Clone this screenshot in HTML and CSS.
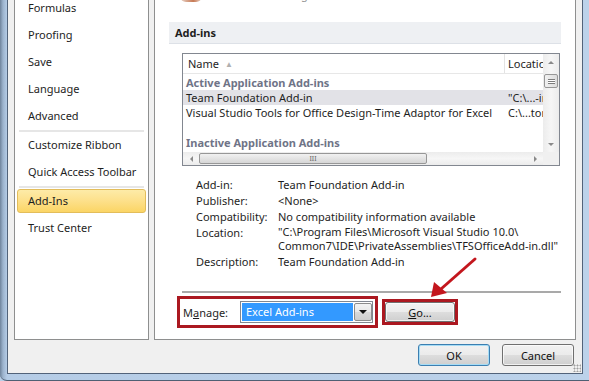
FILE: index.html
```html
<!DOCTYPE html>
<html lang="en">
<head>
  <meta charset="UTF-8">
  <title>Excel Options - Add-Ins</title>
  <link rel="stylesheet" href="styles.css">
</head>
<body>
  <div class="frame">
    <div class="dialog">
      <div class="panes">
        <ul class="nav">
          <li class="nav-item">Formulas</li>
          <li class="nav-item">Proofing</li>
          <li class="nav-item">Save</li>
          <li class="nav-item">Language</li>
          <li class="nav-item">Advanced</li>
          <li class="nav-sep"></li>
          <li class="nav-item">Customize Ribbon</li>
          <li class="nav-item">Quick Access Toolbar</li>
          <li class="nav-sep"></li>
          <li class="nav-item active">Add-Ins</li>
          <li class="nav-item">Trust Center</li>
        </ul>

        <div class="main">
          <div class="intro">
            <span class="intro-icon"></span>
            <span class="intro-text">View and manage Microsoft Office Add-ins.</span>
          </div>

          <div class="section-head">Add-ins</div>

          <div class="list">
            <div class="list-body">
              <div class="list-row list-header">
                <span class="cell">Name <span class="sort">&#9650;</span></span>
                <span class="cell cell-loc">Location</span>
              </div>
              <div class="list-row group"><span class="cell">Active Application Add-ins</span></div>
              <div class="list-row selected">
                <span class="cell">Team Foundation Add-in</span>
                <span class="cell cell-loc">"C:\...-in.dll"</span>
              </div>
              <div class="list-row">
                <span class="cell">Visual Studio Tools for Office Design-Time Adaptor for Excel</span>
                <span class="cell cell-loc">C:\...tor.dll</span>
              </div>
              <div class="list-row"></div>
              <div class="list-row group"><span class="cell">Inactive Application Add-ins</span></div>
              <div class="list-row">
                <span class="cell">Analysis ToolPak</span>
                <span class="cell cell-loc">F:\...PO.XLL</span>
              </div>
            </div>
            <div class="vscroll">
              <span class="sb-btn"><span class="tri tri-up"></span></span>
              <span class="sb-thumb-v"><span class="grip-v"></span></span>
              <span class="sb-track"></span>
              <span class="sb-btn"><span class="tri tri-down"></span></span>
            </div>
            <div class="hscroll">
              <span class="sb-btn"><span class="tri tri-left"></span></span>
              <span class="sb-thumb-h"><span class="grip-h">III</span></span>
              <span class="sb-track"></span>
              <span class="sb-btn"><span class="tri tri-right"></span></span>
            </div>
            <div class="sb-corner"></div>
          </div>

          <div class="details">
            <span class="label">Add-in:</span>
            <span>Team Foundation Add-in</span>
            <span class="label">Publisher:</span>
            <span>&lt;None&gt;</span>
            <span class="label">Compatibility:</span>
            <span>No compatibility information available</span>
            <span class="label">Location:</span>
            <span class="wrap">"C:\Program Files\Microsoft Visual Studio 10.0\<br>Common7\IDE\PrivateAssemblies\TFSOfficeAdd-in.dll"</span>
            <span class="label">Description:</span>
            <span>Team Foundation Add-in</span>
          </div>

          <div class="rule"></div>

          <div class="manage-row">
            <div class="callout manage-box">
              <span class="manage-label">M<u>a</u>nage:</span>
              <div class="combo">
                <span class="combo-value">Excel Add-ins</span>
                <span class="combo-btn"><span class="tri tri-down dark"></span></span>
              </div>
            </div>
            <div class="callout go-box">
              <button class="btn go-btn" type="button"><u>G</u>o...</button>
            </div>
          </div>

          <svg class="pointer" width="422" height="340" viewBox="0 0 422 340">
            <line x1="320" y1="259" x2="286" y2="289" stroke="#c3161d" stroke-width="3" stroke-linecap="round"/>
            <polygon points="276,297 279,282 292,293" fill="#c3161d"/>
          </svg>
        </div>
      </div>

      <div class="actions">
        <button class="btn btn-default" type="button">OK</button>
        <button class="btn" type="button">Cancel</button>
      </div>
    </div>
  </div>
</body>
</html>
```

FILE: styles.css
```css
/* Base */
* { box-sizing: border-box; }
body {
  margin: 0;
  width: 589px;
  height: 381px;
  overflow: hidden;
  font-family: "Noto Sans", "Segoe UI", sans-serif;
  font-size: 11px;
  color: #1e1e1e;
  background: #b8cfe8;
}

/* Window frame */
.frame {
  height: 381px;
  padding: 0 6px 6px 7px;
  background: linear-gradient(to right, #6f849c 0, #9cb3cd 3px, #b5cce6 7px, #bcd2ea 100%);
  border-bottom: 1px solid #4f5f73;
  border-bottom-left-radius: 7px;
}
.dialog {
  position: relative;
  height: 374px;
  display: flex;
  flex-direction: column;
  background: #f0f0f0;
  border: 1px solid #52637a;
  border-top: none;
}
.panes {
  display: flex;
  gap: 5px;
  height: 340px;
  padding: 0 6px;
}

/* Left navigation */
.nav {
  width: 135px;
  margin: 0;
  padding: 0;
  list-style: none;
  background: #fff;
  border: 1px solid #8e8f8f;
  border-top: none;
  overflow: hidden;
}
.nav-item {
  height: 24px;
  line-height: 22px;
  margin: 0 2px 3px;
  padding-left: 10px;
  border: 1px solid transparent;
  border-radius: 3px;
  white-space: nowrap;
}
.nav-item:first-child { margin-top: -4px; }
.nav-item.active {
  background: linear-gradient(to bottom, #fdeba8 0%, #fde08a 50%, #fbd565 100%);
  border-color: #e3bd5a;
}
.nav-sep {
  height: 2px;
  margin: -1px 4px 1px;
  background: #e6e6e6;
}

/* Right content */
.main {
  position: relative;
  flex: 1;
  background: #fff;
  border: 1px solid #8e8f8f;
  border-top: none;
  overflow: hidden;
}
.intro {
  display: flex;
  align-items: center;
  height: 16px;
  margin-top: -14px;
  padding-left: 25px;
  color: #999;
}
.intro-icon {
  width: 22px;
  height: 16px;
  margin-right: 20px;
  border-radius: 0 0 6px 6px;
  background: linear-gradient(to right, #e9d6cc, #c77a55 60%, #e8d3c8);
}
.section-head {
  height: 22px;
  margin: 20px 14px 0;
  padding-left: 6px;
  line-height: 21px;
  font-weight: bold;
  background: #eef0f3;
  border-bottom: 1px solid #dde1e7;
}

/* Add-ins list view */
.list {
  display: grid;
  grid-template-columns: 1fr 16px;
  grid-template-rows: 1fr 13px;
  height: 113px;
  margin: 9px 15px 0 27px;
  border: 1px solid #828790;
}
.list-body {
  overflow: hidden;
}
.list-row {
  display: grid;
  grid-template-columns: 321px 1fr;
  height: 15px;
  line-height: 15px;
  white-space: nowrap;
}
.cell {
  padding-left: 3px;
  overflow: hidden;
}
.cell-loc { padding-left: 4px; }
.list-header {
  height: 20px;
  line-height: 19px;
  margin-bottom: 1px;
  border-bottom: 1px solid #e7e7e7;
}
.list-header .cell { padding-left: 5px; }
.list-header .cell-loc {
  padding-left: 3px;
  border-left: 1px solid #e3e3e3;
}
.sort {
  margin-left: 3px;
  font-size: 8px;
  color: #b0b0b0;
  vertical-align: 1px;
}
.group .cell {
  font-weight: bold;
  color: #6f7487;
}
.selected { background: #e2e2e7; }

/* Scrollbars */
.vscroll, .hscroll {
  display: flex;
  background: linear-gradient(to right, #ececec, #f6f6f6 50%, #ececec);
}
.vscroll { flex-direction: column; }
.hscroll {
  background: linear-gradient(to bottom, #ececec, #f6f6f6 50%, #ececec);
}
.sb-btn {
  display: flex;
  align-items: center;
  justify-content: center;
  flex: 0 0 16px;
}
.sb-track { flex: 1; }
.sb-thumb-v {
  display: flex;
  align-items: center;
  justify-content: center;
  height: 14px;
  margin: 4px 1px 0;
  border: 1px solid #979797;
  border-radius: 2px;
  background: linear-gradient(to right, #f1f1f1, #dcdcdc);
}
.grip-v {
  width: 7px;
  height: 5px;
  border-top: 1px solid #7c7c7c;
  border-bottom: 1px solid #7c7c7c;
  background: linear-gradient(#fff 0 1px, #7c7c7c 1px 2px, #fff 2px);
  background-size: 100% 3px;
}
.sb-thumb-h {
  display: flex;
  align-items: center;
  justify-content: center;
  width: 228px;
  margin: 1px 0;
  border: 1px solid #979797;
  border-radius: 2px;
  background: linear-gradient(to bottom, #f1f1f1, #d6d6d6);
}
.grip-h {
  font-size: 7px;
  line-height: 7px;
  color: #666;
}
.sb-corner { background: #f0f0f0; }
.tri {
  width: 0;
  height: 0;
  border: 3px solid transparent;
}
.tri-up { border-bottom: 3px solid #8a8a8a; border-top-width: 0; }
.tri-down { border-top: 3px solid #8a8a8a; border-bottom-width: 0; }
.tri-left { border-right: 3px solid #8a8a8a; border-left-width: 0; }
.tri-right { border-left: 3px solid #8a8a8a; border-right-width: 0; }
.tri-down.dark {
  border-width: 4px 4px 0;
  border-top-color: #111;
}

/* Add-in details */
.details {
  display: grid;
  grid-template-columns: 82px 1fr;
  row-gap: 1px;
  margin: 11px 0 0 41px;
  line-height: 15px;
  white-space: nowrap;
}
.details .wrap { line-height: 14px; }
.rule {
  height: 2px;
  margin: 22px 14px 0 27px;
  background: #a9a9a9;
}

/* Manage row */
.manage-row {
  display: flex;
  align-items: center;
  gap: 4px;
  margin: 3px 0 0 22px;
}
.callout { border: 3px solid #ab1820; }
.manage-box {
  display: flex;
  align-items: center;
  width: 201px;
  height: 32px;
  padding: 2px 2px 2px 3px;
}
.manage-label { width: 57px; }
.combo {
  display: flex;
  width: 133px;
  height: 22px;
  padding: 1px 0 1px 1px;
  border: 1px solid #828790;
  background: #fff;
}
.combo-value {
  flex: 1;
  margin-right: 1px;
  padding-left: 4px;
  line-height: 18px;
  color: #fff;
  background: #3399ff;
}
.combo-btn {
  display: flex;
  align-items: center;
  justify-content: center;
  width: 18px;
  border: 1px solid #8c8c8c;
  border-radius: 2px;
  background: linear-gradient(to bottom, #f3f3f3 0%, #e8e8e8 50%, #d9d9d9 51%, #cdcdcd 100%);
}
.go-box {
  width: 76px;
  height: 26px;
}
.go-btn {
  width: 70px;
  height: 20px;
}
.pointer {
  position: absolute;
  left: 0;
  top: 0;
  pointer-events: none;
}

/* Buttons */
.btn {
  padding: 0;
  font-family: inherit;
  font-size: 11px;
  color: #111;
  border: 1px solid #707070;
  border-radius: 3px;
  background: linear-gradient(to bottom, #f2f2f2 0%, #ebebeb 50%, #dddddd 51%, #cfcfcf 100%);
  box-shadow: inset 0 0 0 1px rgba(255,255,255,0.7);
}
.btn-default {
  border-color: #3c7fb1;
  box-shadow: inset 0 0 0 1px #a6dcf5;
}
.actions {
  display: flex;
  justify-content: flex-end;
  gap: 12px;
  padding: 4px 8px 0 0;
}
.actions .btn {
  width: 72px;
  height: 22px;
}
.actions::after {
  content: "";
  position: absolute;
  right: 1px;
  bottom: 1px;
  width: 8px;
  height: 8px;
  background: radial-gradient(circle, #a0a0a0 0.8px, transparent 1.2px);
  background-size: 3px 3px;
}
```
